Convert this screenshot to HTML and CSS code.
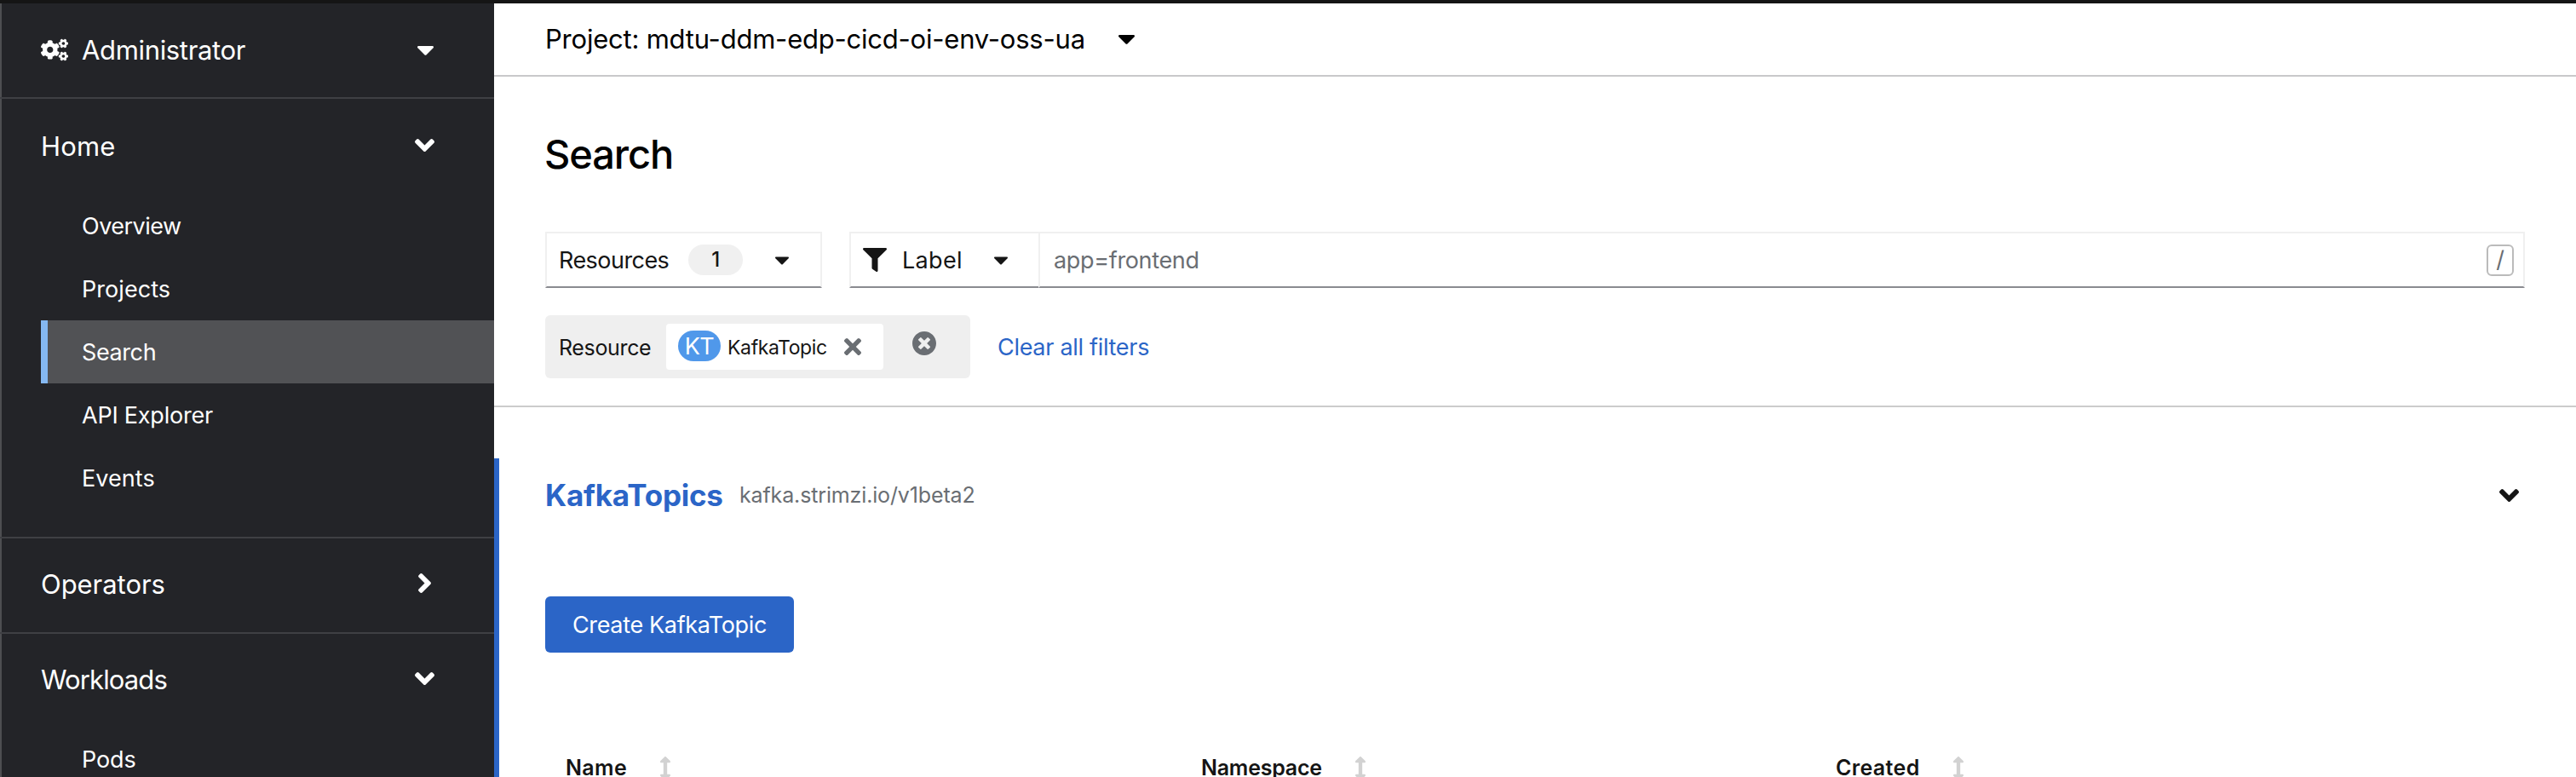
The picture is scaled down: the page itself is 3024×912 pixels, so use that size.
FILE: index.html
```html
<!DOCTYPE html>
<html lang="en">
<head>
<meta charset="utf-8">
<title>Search</title>
<link rel="stylesheet" href="styles.css">
</head>
<body>
<svg class="defs" aria-hidden="true">
  <symbol id="caret" viewBox="11 192 298 169"><path d="M31.3 192h257.3c17.8 0 26.7 21.5 14.1 34.1L174.1 354.8c-7.8 7.8-20.5 7.8-28.3 0L17.2 226.1C4.6 213.5 13.5 192 31.3 192z"/></symbol>
  <symbol id="angle" viewBox="0 152 320 208"><path d="M143 352.3L7 216.3c-9.4-9.4-9.4-24.6 0-33.9l22.6-22.6c9.4-9.4 24.6-9.4 33.9 0l96.4 96.4 96.4-96.4c9.4-9.4 24.6-9.4 33.9 0l22.6 22.6c9.4 9.4 9.4 24.6 0 33.9l-136 136c-9.2 9.4-24.4 9.4-33.8 0z"/></symbol>
  <symbol id="sort" viewBox="18 0 220 512"><path d="M214.059 377.941H168V134.059h46.059c21.382 0 32.09-25.851 16.971-40.971L144.971 7.029c-9.373-9.373-24.568-9.373-33.941 0L24.971 93.088c-15.119 15.119-4.411 40.971 16.971 40.971H88v243.882H41.942c-21.382 0-32.09 25.851-16.971 40.971l86.059 86.059c9.373 9.373 24.568 9.373 33.941 0l86.059-86.059c15.12-15.119 4.412-40.971-16.971-40.971z"/></symbol>
</svg>
<div class="masthead"></div>
<div class="page">
  <nav class="sidebar">
    <div class="perspective">
      <svg class="cogs" viewBox="0 0 640 512">
        <path id="g" d="M512.1 191l-8.2 14.3c-3 5.3-9.4 7.5-15.1 5.4-11.8-4.4-22.6-10.7-32.1-18.6-4.6-3.8-5.8-10.5-2.8-15.7l8.2-14.3c-6.9-8-12.3-17.3-15.9-27.4h-16.5c-6 0-11.2-4.3-12.2-10.3-2-12-2.1-24.6 0-37.1 1-6 6.2-10.4 12.2-10.4h16.5c3.6-10.1 9-19.4 15.9-27.4l-8.2-14.3c-3-5.2-1.9-11.9 2.8-15.7 9.5-7.9 20.4-14.2 32.1-18.6 5.7-2.1 12.1.1 15.1 5.4l8.2 14.3c10.5-1.9 21.2-1.9 31.7 0L552 6.3c3-5.3 9.4-7.5 15.1-5.4 11.8 4.4 22.6 10.7 32.1 18.6 4.6 3.8 5.8 10.5 2.8 15.7l-8.2 14.3c6.9 8 12.3 17.3 15.9 27.4h16.5c6 0 11.2 4.3 12.2 10.3 2 12 2.1 24.6 0 37.1-1 6-6.2 10.4-12.2 10.4h-16.5c-3.6 10.1-9 19.4-15.9 27.4l8.2 14.3c3 5.2 1.9 11.9-2.8 15.7-9.5 7.9-20.4 14.2-32.1 18.6-5.7 2.1-12.1-.1-15.1-5.4l-8.2-14.3c-10.4 1.9-21.2 1.9-31.7 0zm-10.5-58.8c38.5 29.6 82.4-14.3 52.8-52.8-38.5-29.7-82.4 14.3-52.8 52.8z"/>
        <use href="#g" y="301"/>
        <path d="M386.3 286.1l33.7 16.8c10.1 5.8 14.5 18.1 10.5 29.1-8.9 24.2-26.4 46.4-42.6 65.8-7.4 8.9-20.2 11.1-30.3 5.3l-29.1-16.8c-16 13.7-34.6 24.6-54.9 31.7v33.6c0 11.6-8.3 21.6-19.7 23.6-24.6 4.2-50.4 4.4-75.9 0-11.5-2-20-11.9-20-23.6V418c-20.3-7.2-38.9-18-54.9-31.7L74 403c-10 5.8-22.9 3.6-30.3-5.3-16.2-19.4-33.3-41.6-42.2-65.7-4-10.9.4-23.2 10.5-29.1l33.3-16.8c-3.9-20.9-3.9-42.4 0-63.4L12 205.8c-10.1-5.8-14.6-18.1-10.5-29 8.9-24.2 26-46.4 42.2-65.8 7.4-8.9 20.2-11.1 30.3-5.3l29.1 16.8c16-13.7 34.6-24.6 54.9-31.7V57.1c0-11.5 8.2-21.5 19.6-23.5 24.6-4.2 50.5-4.4 76-.1 11.5 2 20 11.9 20 23.6v33.6c20.3 7.2 38.9 18 54.9 31.7l29.1-16.8c10-5.8 22.9-3.6 30.3 5.3 16.2 19.4 33.2 41.6 42.1 65.8 4 10.9.1 23.2-10 29.1l-33.7 16.8c3.9 21 3.9 42.5 0 63.5zm-117.6 21.1c59.2-77-28.7-164.9-105.7-105.7-59.2 77 28.7 164.9 105.7 105.7z"/>
      </svg>
      <span class="perspective-name">Administrator</span>
      <svg class="caret"><use href="#caret"/></svg>
    </div>
    <section class="group group-home">
      <div class="group-title"><span class="t-home">Home</span><svg class="angle"><use href="#angle"/></svg></div>
      <a class="item t-overview">Overview</a>
      <a class="item t-projects">Projects</a>
      <a class="item item-current t-search">Search</a>
      <a class="item t-api">API Explorer</a>
      <a class="item t-events">Events</a>
    </section>
    <section class="group group-collapsed">
      <div class="group-title"><span class="t-operators">Operators</span><svg class="angle angle-right"><use href="#angle"/></svg></div>
    </section>
    <section class="group">
      <div class="group-title"><span class="t-workloads">Workloads</span><svg class="angle"><use href="#angle"/></svg></div>
      <a class="item t-pods">Pods</a>
    </section>
  </nav>
  <main class="main">
    <div class="project-bar"><span class="project-name">Project: mdtu-ddm-edp-cicd-oi-env-oss-ua</span><svg class="caret caret-project"><use href="#caret"/></svg></div>
    <div class="search-head">
      <h1 class="title">Search</h1>
      <div class="toolbar">
        <div class="control resources"><span class="t-resources">Resources</span><span class="count">1</span><svg class="caret-sm"><use href="#caret"/></svg></div>
        <div class="filter">
          <div class="control label-select">
            <svg class="funnel" viewBox="0 0 512 512"><path d="M487.976 0H24.028C2.71 0-8.047 25.866 7.058 40.971L192 225.941V432c0 7.831 3.821 15.17 10.237 19.662l80 55.98C298.02 518.69 320 507.493 320 487.98V225.941l184.947-184.97C520.021 25.896 509.338 0 487.976 0z"/></svg>
            <span class="t-label">Label</span><svg class="caret-sm"><use href="#caret"/></svg>
          </div>
          <div class="control query"><span class="placeholder">app=frontend</span><kbd class="key">/</kbd></div>
        </div>
      </div>
      <div class="chips">
        <div class="chip-group">
          <span class="chip-label">Resource</span>
          <span class="chip"><span class="badge">KT</span><span class="chip-text">KafkaTopic</span>
            <svg class="times" viewBox="0 80 352 352"><path d="M242.72 256l100.07-100.07c12.28-12.28 12.28-32.19 0-44.48l-22.24-22.24c-12.28-12.28-32.19-12.28-44.48 0L176 189.28 75.93 89.21c-12.28-12.28-32.19-12.28-44.48 0L9.21 111.45c-12.28 12.28-12.28 32.19 0 44.48L109.28 256 9.21 356.07c-12.28 12.28-12.28 32.19 0 44.48l22.24 22.24c12.28 12.28 32.2 12.28 44.48 0L176 322.72l100.07 100.07c12.28 12.28 32.2 12.28 44.48 0l22.24-22.24c12.28-12.28 12.28-32.19 0-44.48L242.72 256z"/></svg>
          </span>
          <svg class="clear-group" viewBox="8 8 496 496"><path d="M256 8C119 8 8 119 8 256s111 248 248 248 248-111 248-248S393 8 256 8zm121.6 313.1c4.7 4.7 4.7 12.3 0 17L338 377.6c-4.7 4.7-12.3 4.7-17 0L256 312l-65.1 65.6c-4.7 4.7-12.3 4.7-17 0L134.4 338c-4.7-4.7-4.7-12.3 0-17l65.6-65-65.6-65.1c-4.7-4.7-4.7-12.3 0-17l39.6-39.6c4.7-4.7 12.3-4.7 17 0l65 65.7 65.1-65.6c4.7-4.7 12.3-4.7 17 0l39.6 39.6c4.7 4.7 4.7 12.3 0 17L312 256l65.6 65.1z"/></svg>
        </div>
        <a class="clear-all">Clear all filters</a>
      </div>
    </div>
    <section class="results">
      <div class="results-head">
        <h2 class="kind">KafkaTopics</h2><span class="api">kafka.strimzi.io/v1beta2</span>
        <svg class="angle angle-dark"><use href="#angle"/></svg>
      </div>
      <button class="create">Create KafkaTopic</button>
      <div class="columns">
        <div class="column"><span class="t-name">Name</span><svg class="sort"><use href="#sort"/></svg></div>
        <div class="column"><span class="t-namespace">Namespace</span><svg class="sort"><use href="#sort"/></svg></div>
        <div class="column"><span class="t-created">Created</span><svg class="sort"><use href="#sort"/></svg></div>
      </div>
    </section>
  </main>
</div>
</body>
</html>
```
FILE: styles.css
```css
* { box-sizing: border-box; }
body { margin: 0; height: 912px; overflow: hidden; background: #fff; color: #151515; font: 400 27px/40px Inter, "Liberation Sans", sans-serif; white-space: nowrap; }
h1, h2 { margin: 0; }
svg { display: block; flex: none; fill: currentColor; }
.defs { display: none; }
.masthead { height: 4px; background: #151515; }
.page { display: flex; height: 908px; overflow: hidden; }

/* Navigation */
.sidebar { flex: none; width: 580px; background: #232428; color: #fff; box-shadow: inset 2px 0 #4d4e51; }
.perspective { display: flex; align-items: center; height: 112px; padding: 0 71px 0 48px; border-bottom: 2px solid #3f4044; }
.cogs { width: 32px; height: 27px; margin: -1px 16px 0 0; }
.perspective-name { font-size: 31px; letter-spacing: -.34px; }
.caret { width: 19px; height: 11px; margin-left: auto; }
.group { border-bottom: 2px solid #3f4044; }
.group-home { padding: 2px 0 32px; }
.group-title { display: flex; align-items: center; justify-content: space-between; height: 110px; padding: 0 70px 2px 48px; font-size: 31px; }
.angle { width: 23px; height: 15px; margin-top: -4px; }
.angle-right { transform: rotate(-90deg); }
.item { display: flex; align-items: center; height: 74px; margin-left: 48px; padding: 2px 0 0 48px; }
.item-current { padding-left: 40px; border-left: 8px solid #85b8f1; background: #515255; }
.t-home { letter-spacing: .14px; }
.t-overview { letter-spacing: -.51px; }
.t-projects { letter-spacing: .05px; }
.t-search { letter-spacing: -.4px; }
.t-api { letter-spacing: -.22px; }
.t-events { letter-spacing: .07px; }
.t-operators { letter-spacing: -.05px; }
.t-workloads { letter-spacing: -.88px; }
.t-pods { letter-spacing: -.11px; }

/* Project selector */
.main { flex: 1; min-width: 0; }
.project-bar { display: flex; align-items: center; height: 86px; padding-left: 60px; border-bottom: 2px solid #c9c9cb; color: #000; }
.project-name { font-size: 31px; letter-spacing: -.22px; }
.caret-project { margin: 0 0 0 39px; }

/* Search toolbar */
.search-head { height: 388px; padding: 60px 60px 0; border-bottom: 2px solid #ccc; }
.title { height: 122px; padding-top: 1px; color: #000; font-size: 47px; font-weight: 500; line-height: 60px; letter-spacing: -1.1px; text-indent: -1px; }
.toolbar { display: flex; gap: 32px; }
.control { display: flex; align-items: center; height: 66px; border: 2px solid #f0f0f0; border-bottom-color: #8a8b90; }
.resources { width: 325px; padding-left: 14px; }
.t-resources { padding-top: 2px; letter-spacing: -.55px; }
.count { width: 64px; height: 36px; margin: 0 38px 0 23px; border-radius: 18px; background: #f0f0f0; font-size: 24px; font-weight: 500; line-height: 35px; text-align: center; }
.caret-sm { width: 16px; height: 10px; margin-top: 2px; }
.filter { display: flex; flex: 1; }
.label-select { width: 222px; padding-left: 14px; border-right: 0; }
.funnel { width: 28px; height: 28px; margin-right: 18px; }
.t-label { width: 108px; padding-top: 2px; letter-spacing: .32px; }
.query { flex: 1; justify-content: space-between; padding: 0 11px 0 16px; }
.placeholder { padding-top: 2px; color: #6a6e73; letter-spacing: -.34px; }
.key { width: 32px; height: 37px; border: 2px solid #bbb; border-radius: 6px; color: #6a6e73; font: 27px/32px Inter, sans-serif; text-align: center; }
.chips { display: flex; align-items: center; gap: 32px; margin-top: 32px; }
.chip-group { display: flex; align-items: center; width: 499px; height: 74px; padding-left: 16px; border-radius: 6px; background: #efefef; }
.chip-label { width: 126px; padding-top: 1px; font-size: 25px; letter-spacing: -.35px; }
.chip { display: flex; align-items: center; width: 255px; height: 54px; padding-left: 14px; border-radius: 4px; background: #fff; }
.badge { width: 50px; height: 36px; margin-top: -2px; border-radius: 18px; background: #5098ea; color: #fff; font-size: 27px; line-height: 37px; letter-spacing: -.64px; text-align: center; }
.chip-text { width: 138px; padding: 1px 0 0 8px; font-size: 23px; letter-spacing: -.37px; }
.times { width: 20px; height: 20px; margin-left: 7px; color: #6a6e73; }
.clear-group { width: 28px; height: 28px; margin: -8px 0 0 34px; color: #6a6e73; }
.clear-all { padding-top: 2px; color: #2b65c7; letter-spacing: -.3px; }

/* Result list */
.results { height: 374px; margin-top: 60px; padding: 0 60px 0 54px; border-left: 6px solid #2b65c7; }
.results-head { display: flex; align-items: center; height: 86px; }
.kind { width: 228px; color: #2b65c7; font-size: 35px; font-weight: 700; letter-spacing: -.25px; }
.api { color: #6a6e73; font-size: 25px; letter-spacing: -.14px; }
.angle-dark { margin: 0 7px 0 auto; }
.create { display: block; width: 292px; height: 66px; margin-top: 76px; padding: 0; border: 0; border-radius: 6px; background: #2b65c7; color: #fff; font: 400 27px/67px Inter, sans-serif; letter-spacing: -.34px; }
.columns { display: grid; grid-template-columns: 746px 745px 1fr; margin: 122px 0 0 24px; font-size: 25px; font-weight: 600; line-height: 20px; }
.column { display: flex; align-items: center; }
.column span { margin-top: -2px; }
.sort { width: 12px; height: 28px; margin-left: 39px; color: #d2d2d2; }
.t-name { letter-spacing: .38px; }
.t-namespace { letter-spacing: -.24px; }
.t-created { letter-spacing: .35px; }
```
